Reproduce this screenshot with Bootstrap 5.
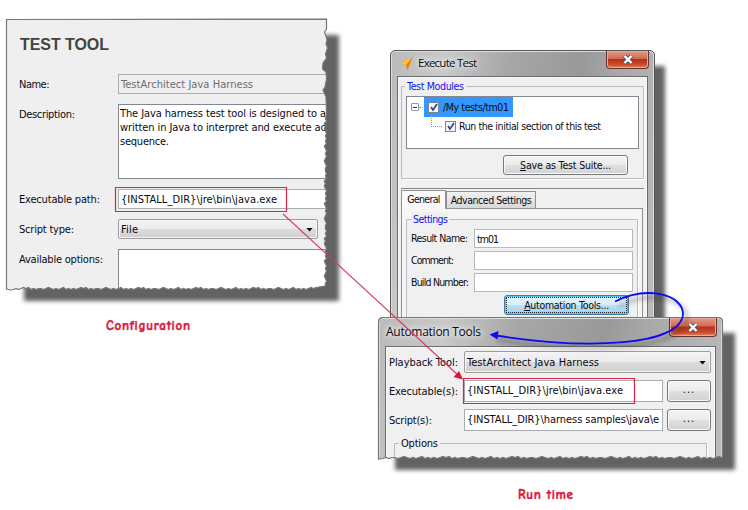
<!DOCTYPE html>
<html lang="en">
<head>
<meta charset="utf-8">
<title>Test tool configuration</title>
<link rel="stylesheet" href="https://cdn.jsdelivr.net/npm/bootstrap@5.3.0/dist/css/bootstrap.min.css">
<style>
body{width:748px;height:510px;overflow:hidden;background:#fff;color:#0a0a14;font:11px/14px "Tahoma","DejaVu Sans Condensed","DejaVu Sans",sans-serif;font-stretch:condensed;white-space:nowrap}
.canvas{width:748px;height:510px}
.win,.shade,.ink{position:absolute}
.shade{background:#626262;filter:blur(2px)}
.s1{left:24px;top:35px;width:315px;height:266px}
.s2{left:410px;top:66px;width:255px;height:260px}
.s3{left:395px;top:333px;width:340px;height:137px}
.ink{left:0;top:0}
.cfg{left:6px;top:19px;width:322px;height:273px;background:#efefef;border:1px solid #7d8084;clip-path:url(#tornA);padding:17px 0 0 12px}
.heading{font:bold 16px/16px "Liberation Sans",Arial,sans-serif;color:#444340;margin-bottom:21px;height:16px;padding-left:1px}
.rows{gap:10px}
.cap1{width:99px;height:20px;flex:none;line-height:21px}
.fld{background:#fff;border:1px solid #abadb3;line-height:18px;padding-left:2px;overflow:hidden}
.cfg .fld{height:20px;width:230px;line-height:19px}
.cfg .area{height:75px;line-height:14px;padding-top:2px;padding-left:1px;border-color:#828790}
.cfg .off{background:#efefef;color:#6d6d6d}
.combo{background:linear-gradient(#f3f3f3,#ebebeb 50%,#dcdcdc 51%,#d0d0d0);border:1px solid #9a9c9e;border-radius:2px;box-shadow:inset 0 0 0 1px #f6f6f6;padding:1px 4px 0 2px}
.cfg .combo{height:20px;width:200px}
.tri{width:7px;height:4px;background:#000;clip-path:polygon(0 0,100% 0,50% 100%)}
.frame{background:linear-gradient(100deg,#bababa 0,#c9c9c9 18%,#a7a7a7 38%,#999 62%,#aaa 75%,#bcbcbc);border:1px solid #555}
.exec{left:390px;top:50px;width:265px;height:276px;border-radius:5px 5px 0 0;padding:0 6px;box-shadow:inset 0 0 0 1px #ddd;font-size:10.5px}
.bar{height:25px}
.ttl{font:12px/16px "Segoe UI","Open Sans","Noto Sans",sans-serif;text-shadow:0 0 5px #fff,0 0 8px #fff;margin-left:1px}
.exec .ttl{font-size:11.5px;margin:-2px 0 0 4px}
.shut{background:linear-gradient(#e39b88,#cf6b52 45%,#b8301a 50%,#c94c2b 80%,#e48a62);border:1px solid #633;border-top:0;border-radius:0 0 4px 4px;box-shadow:inset 0 0 0 1px #e8a99a}
.exec .shut{width:43px;height:18px;margin-right:-1px}
.client{background:#f0f0f0;border:1px solid #666b70;border-bottom:0;box-shadow:inset 0 0 0 1px #fafafa}
.exec .client{height:250px;padding:9px 3px 0}
.grp{border:1px solid #b9bbbe;border-radius:1px;box-shadow:1px 1px 0 #fff}
.leg{background:#f0f0f0;width:max-content;padding:0 2px;margin:-7px 0 0 4px;height:14px}
.blue{color:#1010f0}
.mods{height:93px;width:243px;padding:0 4px}
.mods .leg{margin:-8px 0 0 -1px;height:15px}
.tree{height:53px;margin-top:2px;background:#fff;border:1px solid #828790;padding:0 4px}
.pick{background:#3397fd;width:89px;height:20px;gap:4px;padding-left:4px;margin-left:-1px}
.box{width:11px;height:11px;background:#f5f6f8;border:1px solid #7c858f}
.exp{width:8px;height:8px;border:1px solid #8d99a6;background:#fff;border-radius:1px}
.dots{width:6px;border-top:1px dotted #999}
.branch{width:11px;height:12px;border-left:1px dotted #999;border-bottom:1px dotted #999;margin:-2px 3px 8px 20px}
.box.gapr{margin-right:3px}
.suite{padding:6px 11px 0 0}
.push{background:linear-gradient(#f4f4f4,#ececec 48%,#dfdfdf 52%,#d2d2d2);border:1px solid #75777a;border-radius:3px;box-shadow:inset 0 0 0 1px #fafafa;text-align:center}
.exec .push{width:125px;height:20px;line-height:18px}
.hot{background:linear-gradient(#e6f5fd,#d7effb 48%,#b9e0f5 52%,#a5d0e8)!important;border-color:#3c7fb1!important;box-shadow:inset 0 0 0 1px #5bc4ec;outline:1px dotted #222;outline-offset:-3px}
.sep{border-top:1px solid #858585;margin-top:9px;height:2px}
.t1{width:45px;height:19px;background:#fafafa;border:1px solid #8e9196;border-bottom:0;text-align:center;line-height:17px;z-index:1;margin-bottom:-1px}
.t2{width:90px;height:17px;background:linear-gradient(#f0f0f0,#d8d8d8);border:1px solid #8e9196;border-bottom:0;text-align:center;line-height:17px}
.pane{border:1px solid #8e9196;border-bottom:0;width:242px;height:118px;padding:10px 4px 0;background:#f6f6f6}
.set{height:110px;padding:0 4px;background:#f0f0f0}
.set .leg{margin:-8px 0 2px;height:15px}
.set .rowf{height:19px;margin-bottom:3px}
.set .cap2{width:63px;flex:none;line-height:19px}
.set .fld{width:160px;height:19px;line-height:18px;border-color:#b6b8be}
.auto{left:378px;top:317px;width:345px;height:144px;border-radius:5px 5px 0 0;padding:0 6px;clip-path:url(#tornB);box-shadow:inset 0 0 0 1px #ddd}
.auto .bar{height:28px}
.auto .shut{width:48px;height:19px;margin-right:-1px}
.auto .client{padding:4px 3px;height:120px}
.auto .rowf{height:22px;margin-bottom:7px}
.auto .cap3{width:75px;flex:none;padding-top:1px}
.auto .combo{width:247px;height:22px}
.auto .fld{width:199px;height:22px;line-height:20px}
.auto .push{width:44px;height:22px;line-height:18px;margin-left:4px;letter-spacing:1px}
.opt{margin:12px 0 0 5px;width:313px;height:60px}
.note{position:absolute;color:#dc143c;font:bold 13px/16px "Comic Sans MS","Comic Neue","Lato",sans-serif;-webkit-text-stroke:.45px #dc143c}
.n1{left:106px;top:318px}
.n2{left:518px;top:487px}
u{text-underline-offset:1px}
</style>
<script src="https://cdn.jsdelivr.net/npm/bootstrap@5.3.0/dist/js/bootstrap.bundle.min.js"></script>
</head>
<body>
<main class="canvas position-relative overflow-hidden">
<div class="shade s1"></div>
<section class="win cfg">
  <div class="heading"><span class="fit" data-w="89">TEST TOOL</span></div>
  <div class="d-flex flex-column rows">
    <div class="d-flex"><div class="cap1"><span class="fit" data-w="30.5">Name:</span></div><div class="fld off"><span class="fit" data-w="132">TestArchitect Java Harness</span></div></div>
    <div class="d-flex"><div class="cap1"><span class="fit" data-w="56">Description:</span></div><div class="fld area"><span class="fit" data-w="206">The Java harness test tool is designed to a</span><br><span class="fit" data-w="206">written in Java to interpret and execute ac</span><br><span class="fit" data-w="49">sequence.</span></div></div>
    <div class="d-flex"><div class="cap1"><span class="fit" data-w="81">Executable path:</span></div><div class="fld"><span class="fit" data-w="156">{INSTALL_DIR}\jre\bin\java.exe</span></div></div>
    <div class="d-flex"><div class="cap1"><span class="fit" data-w="55">Script type:</span></div><div class="combo d-flex align-items-center justify-content-between"><span class="fit" data-w="17">File</span><i class="tri"></i></div></div>
    <div class="d-flex"><div class="cap1"><span class="fit" data-w="84">Available options:</span></div><div class="fld area"></div></div>
  </div>
</section>
<div class="shade s2"></div>
<section class="win exec frame">
  <div class="bar d-flex justify-content-between">
    <div class="d-flex align-items-center">
      <svg width="13" height="13" viewBox="0 0 13 13" class="ms-1"><path d="M11.500 0 0 6.500l5 1.500 1.500 5z" fill="#f5a100"/><path d="M11.500 0 0 6.500 5 8z" fill="#ffc62a"/><path d="M11.500 0 5 8l1.500 5z" fill="#e97f08"/></svg>
      <span class="ttl fit" data-w="59">Execute Test</span>
    </div>
    <div class="shut d-flex align-items-center justify-content-center"><svg width="12" height="11" viewBox="0 0 12 11"><path d="m2.500 2 7 7m0-7-7 7" stroke="#555d68" stroke-width="4.500"/><path d="m2.500 2 7 7m0-7-7 7" stroke="#fff" stroke-width="2.400"/></svg></div>
  </div>
  <div class="client">
    <div class="grp mods">
      <div class="leg blue"><span class="fit" data-w="57">Test Modules</span></div>
      <div class="tree">
        <div class="d-flex align-items-center"><i class="exp d-flex align-items-center justify-content-center"><svg width="4" height="1"><path d="M0 .5h4" stroke="#333"/></svg></i><i class="dots"></i>
          <div class="pick d-flex align-items-center"><i class="box d-flex"><svg width="9" height="9"><path d="M2 4l2 3 4-6" fill="none" stroke="#34458c" stroke-width="1.700"/></svg></i><span class="fit" data-w="66">/My tests/tm01</span></div></div>
        <div class="d-flex align-items-center"><i class="branch"></i><i class="box gapr d-flex"><svg width="9" height="9"><path d="M2 4l2 3 4-6" fill="none" stroke="#34458c" stroke-width="1.700"/></svg></i><span class="fit" data-w="142">Run the initial section of this test</span></div>
      </div>
      <div class="d-flex justify-content-end suite"><div class="push"><span class="fit" data-w="91"><u>S</u>ave as Test Suite...</span></div></div>
    </div>
    <div class="sep"></div>
    <div class="d-flex align-items-end"><div class="t1 position-relative"><span class="fit" data-w="33">General</span></div><div class="t2"><span class="fit" data-w="81">Advanced Settings</span></div></div>
    <div class="pane"><div class="grp set">
      <div class="leg blue"><span class="fit" data-w="35">Settings</span></div>
      <div class="d-flex rowf"><div class="cap2"><span class="fit" data-w="57">Result Name:</span></div><div class="fld"><span class="fit" data-w="22">tm01</span></div></div>
      <div class="d-flex rowf"><div class="cap2"><span class="fit" data-w="43">Comment:</span></div><div class="fld"></div></div>
      <div class="d-flex rowf"><div class="cap2"><span class="fit" data-w="58">Build Number:</span></div><div class="fld"></div></div>
      <div class="d-flex justify-content-end pe-1"><div class="push hot"><span class="fit" data-w="85"><u>A</u>utomation Tools...</span></div></div>
    </div></div>
  </div>
</section>
<div class="shade s3"></div>
<section class="win auto frame">
  <div class="bar d-flex justify-content-between"><div class="d-flex align-items-center"><span class="ttl fit" data-w="95">Automation Tools</span></div>
    <div class="shut d-flex align-items-center justify-content-center"><svg width="12" height="11" viewBox="0 0 12 11"><path d="m2.500 2 7 7m0-7-7 7" stroke="#555d68" stroke-width="4.500"/><path d="m2.500 2 7 7m0-7-7 7" stroke="#fff" stroke-width="2.400"/></svg></div></div>
  <div class="client">
    <div class="d-flex rowf align-items-center"><div class="cap3"><span class="fit" data-w="69">Playback Tool:</span></div><div class="combo d-flex align-items-center justify-content-between"><span class="fit" data-w="132">TestArchitect Java Harness</span><i class="tri"></i></div></div>
    <div class="d-flex rowf align-items-center"><div class="cap3"><span class="fit" data-w="69">Executable(s):</span></div><div class="fld"><span class="fit" data-w="156">{INSTALL_DIR}\jre\bin\java.exe</span></div><div class="push">...</div></div>
    <div class="d-flex rowf align-items-center"><div class="cap3"><span class="fit" data-w="43">Script(s):</span></div><div class="fld"><span class="fit" data-w="192">{INSTALL_DIR}\harness samples\java\e</span></div><div class="push">...</div></div>
    <div class="grp opt"><div class="leg"><span class="fit" data-w="37">Options</span></div></div>
  </div>
</section>
<svg class="ink" width="748" height="510" viewBox="0 0 748 510" fill="none">
  <defs>
    <clipPath id="tornA"><path id="edgeA" d="M0 0"/></clipPath>
    <clipPath id="tornB"><path id="edgeB" d="M0 0"/></clipPath>
    <filter id="soft" x="-20%" y="-50%" width="140%" height="200%"><feGaussianBlur stdDeviation="2"/></filter>
  </defs>
  <use href="#edgeA" x="6" y="19" stroke="#777" stroke-width="1.200"/>
  <use href="#edgeB" x="378" y="317" stroke="#777" stroke-width="1.200"/>
  <path d="M115.500 187.500h171v24h-171zM463.500 378.500h171v25h-171z" stroke="#dc2448" stroke-width="1.200"/>
  <path d="M283 214 459 376" stroke="#d63a58" stroke-width="1.100"/><path d="M463 379.500 453.500 377l5.500-6z" fill="#dc143c"/>
  <path d="M619 306C652 289 687 300 687 318C684 350 590 354 497 340" stroke="#333" stroke-opacity=".35" stroke-width="3" filter="url(#soft)"/>
  <path d="M615 301.500C648 285 683 295 683 314C681 346 588 350 496 335.500" stroke="#0a0af5" stroke-width="1.800"/>
  <path d="m489.500 334.500 9-3.500-1 8.500z" fill="#0a0af5"/>
</svg>
<div class="note n1"><span class="fit" data-w="84">Configuration</span></div>
<div class="note n2"><span class="fit" data-w="55">Run time</span></div>
</main>
<script>
document.querySelectorAll('.fit').forEach(el => {
  el.style.letterSpacing = '0';
  const n = el.textContent.length - 1, w = el.getBoundingClientRect().width;
  el.style.letterSpacing = ((el.dataset.w - w) / n).toFixed(3) + 'px';
});
// Torn paper edges: right side and bottom of panel A, bottom of panel B.
const bite = [0,1,0,2,1,2,1,0,1,0,1,0,2,1,0,1,0,1,2,1,0,1,1];
const right = [[320.500,0],[320.500,10],[318.500,13],[320,17],[321,21],[320,25],[321.500,29],[319.500,35],[320.500,39],[317,44],[316.500,50],[320,53],[320.500,60],[319,68],[317,71],[320,78],[320.500,94]];
for (let y = 97, i = 0; y < 266; y += 2.500, i++) right.push([320.500 - bite[i % 23] * 1.100, y]);
let a = 'M.5 .5' + right.map(p => 'L' + p[0] + ' ' + p[1]).join('') + 'L319 267L313 268';
for (let x = 310, i = 3; x > 6; x -= 2.500, i++) a += 'L' + x + ' ' + (270.500 - bite[i % 23]);
document.getElementById('edgeA').setAttribute('d', a + 'L4 271L.5 270z');
let b = 'M.5 142V5Q.5 .5 5 .5H340Q344.500 .5 344.500 5V141';
for (let x = 341, i = 5; x > 4; x -= 3, i++) b += 'L' + x + ' ' + (141.500 - bite[i % 23]);
document.getElementById('edgeB').setAttribute('d', b + 'z');
</script>
</body>
</html>
